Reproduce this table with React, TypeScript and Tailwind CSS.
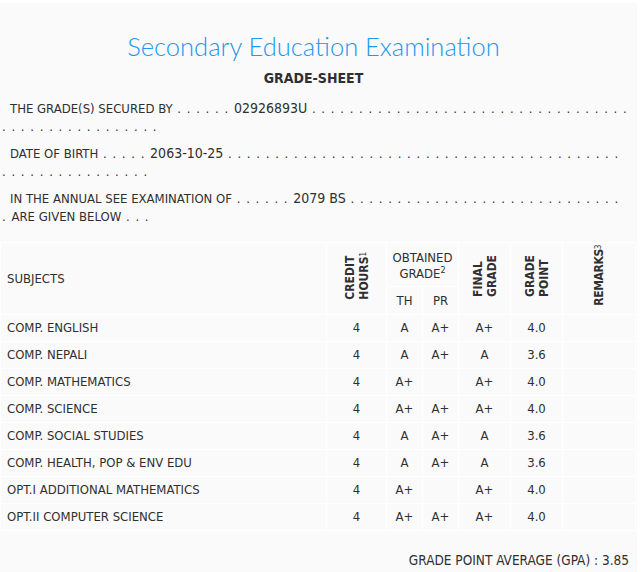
import React from "react";

const rows: string[][] = [
  ["COMP. ENGLISH", "4", "A", "A+", "A+", "4.0"],
  ["COMP. NEPALI", "4", "A", "A+", "A", "3.6"],
  ["COMP. MATHEMATICS", "4", "A+", "", "A+", "4.0"],
  ["COMP. SCIENCE", "4", "A+", "A+", "A+", "4.0"],
  ["COMP. SOCIAL STUDIES", "4", "A", "A+", "A", "3.6"],
  ["COMP. HEALTH, POP & ENV EDU", "4", "A", "A+", "A", "3.6"],
  ["OPT.I ADDITIONAL MATHEMATICS", "4", "A+", "", "A+", "4.0"],
  ["OPT.II COMPUTER SCIENCE", "4", "A+", "A+", "A+", "4.0"],
];

function Dots({ n }: { n: number }) {
  return <span className="tracking-[1px]">{" " + Array(n).fill(".").join(" ") + " "}</span>;
}

function Val({ children }: { children: React.ReactNode }) {
  return <span className="text-[14px] leading-[12px]">{children}</span>;
}

function Rot({ lines, sup, tight }: { lines: string[]; sup?: string; tight?: boolean }) {
  return (
    <div
      className={
        "inline-block rotate-180 text-left font-bold text-[12px] leading-[14px] [writing-mode:vertical-rl] " +
        (tight ? "tracking-[-0.4px]" : "")
      }
    >
      {lines.map((l, i) => (
        <div key={i}>
          {l}
          {sup && i === lines.length - 1 ? <span className="text-[8px] font-normal">{sup}</span> : null}
        </div>
      ))}
    </div>
  );
}

export default function App() {
  return (
    <div className="min-h-screen bg-white pt-[3px] text-[#2f2f2f] font-['DejaVu_Sans_Condensed','Liberation_Sans',sans-serif] text-[13px]">
      <div className="w-[637px] bg-[#fafafa] pb-[40px]">
        <h1 className="w-[627px] pt-[26px] text-center text-[25.5px] leading-[34px] font-light text-[#2196f3] font-['Lato',sans-serif]">
          Secondary Education Examination
        </h1>
        <div className="w-[627px] mt-[6px] text-center font-bold text-[14px] leading-[18px]">GRADE-SHEET</div>

        <div className="mt-[13px] pl-[2px] pr-[5px] leading-[18px] flex flex-col gap-[9px]">
          <div>
            <div className="pl-[8px] whitespace-nowrap">
              THE GRADE(S) SECURED BY<Dots n={6} />
              <Val>02926893U</Val>
              <Dots n={34} />
            </div>
            <div className="whitespace-nowrap">
              <Dots n={17} />
            </div>
          </div>
          <div>
            <div className="pl-[8px] whitespace-nowrap">
              DATE OF BIRTH<Dots n={5} />
              <Val>2063-10-25</Val>
              <Dots n={42} />
            </div>
            <div className="whitespace-nowrap">
              <Dots n={16} />
            </div>
          </div>
          <div>
            <div className="pl-[8px] whitespace-nowrap">
              IN THE ANNUAL SEE EXAMINATION OF<Dots n={6} />
              <Val>2079 BS</Val>
              <Dots n={29} />
            </div>
            <div className="whitespace-nowrap">
              <span className="tracking-[1px]">. </span>ARE GIVEN BELOW<Dots n={3} />
            </div>
          </div>
        </div>

        <table className="mt-[16px] w-[635px] border-collapse table-fixed">
          <colgroup>
            <col className="w-[326px]" />
            <col className="w-[60px]" />
            <col className="w-[36px]" />
            <col className="w-[36px]" />
            <col className="w-[52px]" />
            <col className="w-[52px]" />
            <col className="w-[73px]" />
          </colgroup>
          <thead>
            <tr className="h-[44px]">
              <th rowSpan={2} className="border border-white text-left font-normal pl-[6px] align-middle">
                SUBJECTS
              </th>
              <th rowSpan={2} className="border border-white align-middle">
                <Rot lines={["CREDIT", "HOURS"]} sup="1" />
              </th>
              <th colSpan={2} className="border border-white font-normal leading-[16px] align-middle pt-[2px]">
                OBTAINED
                <br />
                GRADE<sup className="text-[9px]">2</sup>
              </th>
              <th rowSpan={2} className="border border-white align-middle">
                <Rot lines={["FINAL", "GRADE"]} />
              </th>
              <th rowSpan={2} className="border border-white align-middle">
                <Rot lines={["GRADE", "POINT"]} />
              </th>
              <th rowSpan={2} className="border border-white align-middle">
                <Rot lines={["REMARKS"]} sup="3" tight />
              </th>
            </tr>
            <tr className="h-[28px]">
              <th className="border border-white font-normal">TH</th>
              <th className="border border-white font-normal">PR</th>
            </tr>
          </thead>
          <tbody>
            {rows.map((r) => (
              <tr key={r[0]} className="h-[27px]">
                <td className="border border-white pl-[6px]">{r[0]}</td>
                {r.slice(1).map((c, i) => (
                  <td key={i} className="border border-white text-center">
                    {c}
                  </td>
                ))}
                <td className="border border-white"></td>
              </tr>
            ))}
          </tbody>
        </table>

        <div className="mt-[20px] w-[629px] text-right leading-[18px] text-[13.5px]">
          GRADE POINT AVERAGE (GPA) : 3.85
        </div>
      </div>
    </div>
  );
}
